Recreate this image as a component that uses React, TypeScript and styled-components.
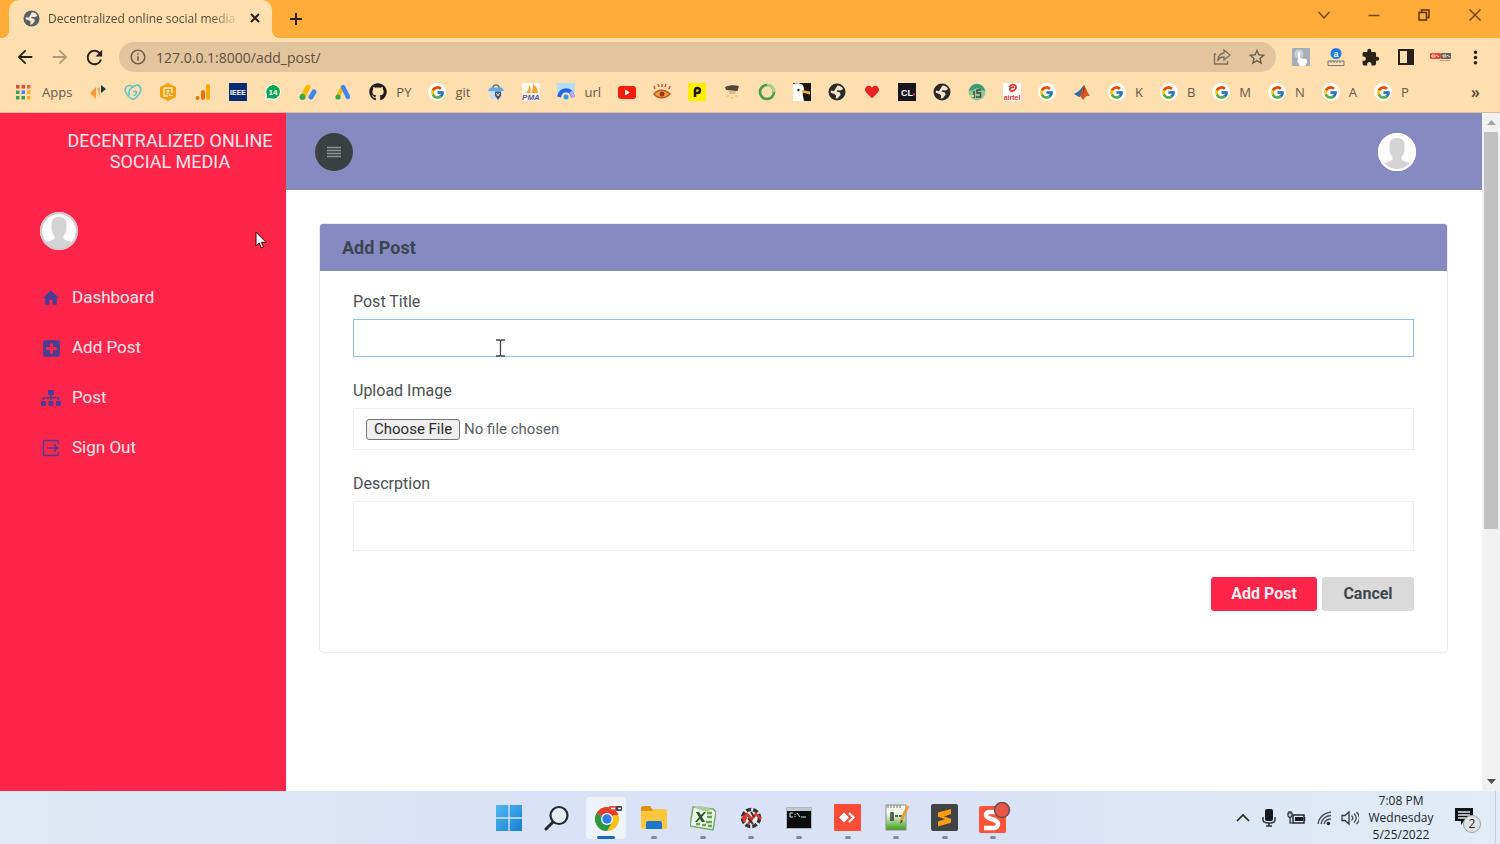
import React from "react";
import styled, { createGlobalStyle, css } from "styled-components";
import { FcGoogle } from "react-icons/fc";
import { FaGithub, FaSitemap, FaPlusSquare, FaHeart } from "react-icons/fa";
import { MdHome, MdExtension, MdMoreVert, MdStarBorder, MdArrowBack, MdArrowForward, MdRefresh, MdInfoOutline } from "react-icons/md";

const GlobalStyle = createGlobalStyle`
  * { box-sizing: border-box; }
  body { margin: 0; font-family: Roboto, "Liberation Sans", sans-serif; color: #4a4f52; background: #fff; }
  button, input, textarea { font-family: inherit; }
  a { color: inherit; text-decoration: none; }
  svg { display: block; flex: none; }
`;

const uiFont = css`font-family: "Open Sans", "Noto Sans", sans-serif;`;

const Screen = styled.div`
  min-height: 100vh;
  display: flex;
  flex-direction: column;
`;

/* ---------- browser chrome ---------- */

const TabStrip = styled.div`
  height: 38px;
  padding-left: 9px;
  display: flex;
  align-items: center;
  background: #ffac38;
`;

const Tab = styled.div`
  ${uiFont}
  position: relative;
  align-self: stretch;
  width: 263px;
  padding: 0 10px 2px 14px;
  display: flex;
  align-items: center;
  gap: 8px;
  background: #ffdfb0;
  border-radius: 10px 10px 0 0;
  font-size: 12px;
  color: #55493a;
  &::before, &::after {
    content: "";
    position: absolute;
    bottom: 0;
    width: 8px;
    height: 8px;
  }
  &::before { left: -8px; background: radial-gradient(circle at 0 0, transparent 8px, #ffdfb0 8px); }
  &::after { right: -8px; background: radial-gradient(circle at 100% 0, transparent 8px, #ffdfb0 8px); }
`;

const TabTitle = styled.span`
  flex: 1;
  overflow: hidden;
  white-space: nowrap;
  mask-image: linear-gradient(to right, #000 85%, transparent 100%);
`;

const IconButton = styled.button<{ $w?: number; $tone?: string }>`
  width: ${(p) => p.$w ?? 35}px;
  height: 30px;
  padding: 0;
  border: 0;
  background: none;
  color: ${(p) => p.$tone ?? "#2a2118"};
  display: flex;
  flex: none;
  align-items: center;
  justify-content: center;
`;

const WindowControls = styled.div`
  align-self: flex-start;
  margin-left: auto;
  display: flex;
`;

const Toolbar = styled.div`
  height: 38px;
  padding: 0 7px;
  display: flex;
  align-items: center;
  background: #ffdfb0;
`;

const AddressBar = styled.div`
  flex: 1;
  height: 30px;
  margin: 0 7px;
  padding: 0 2px 0 10px;
  display: flex;
  align-items: center;
  border-radius: 15px;
  background: #e3c59d;
  color: #6b5c49;
`;

const AddressInput = styled.input`
  ${uiFont}
  flex: 1;
  min-width: 0;
  margin-left: 9px;
  padding: 0;
  border: 0;
  outline: 0;
  background: none;
  color: #5e5141;
  font-size: 14px;
`;

const BookmarkBar = styled.nav`
  ${uiFont}
  height: 37px;
  padding: 0 20px 4px 15px;
  display: flex;
  align-items: center;
  gap: 17px;
  background: #ffdfb0;
  border-bottom: 1px solid #d5bda2;
  font-size: 13px;
  color: #66594a;
`;

const Bookmark = styled.a`
  display: flex;
  align-items: center;
  gap: 9px;
`;

const GoogleBadge = styled.span`
  width: 18px;
  height: 18px;
  display: grid;
  place-items: center;
  border-radius: 50%;
  background: #fff;
`;

const More = styled.button`
  ${uiFont}
  margin-left: auto;
  padding: 0;
  border: 0;
  background: none;
  color: #4b4034;
  font-size: 16px;
  font-weight: 600;
`;

/* ---------- web page ---------- */

const Viewport = styled.div`
  flex: 1;
  display: flex;
`;

const Sidebar = styled.aside`
  position: relative;
  width: 286px;
  flex: none;
  background: #ff244a;
  color: #ffe6ea;
`;

const Brand = styled.h1`
  margin: 0;
  padding: 17px 0 0 54px;
  font-size: 18px;
  line-height: 21px;
  font-weight: 400;
  text-align: center;
`;

const SidebarAvatar = styled.div`
  margin: 40px 0 0 40px;
`;

const NavList = styled.ul`
  margin: 0;
  padding: 32px 0 0 40px;
  list-style: none;
  display: grid;
  gap: 20px;
`;

const NavLink = styled.a`
  height: 30px;
  display: flex;
  align-items: center;
  gap: 10px;
  font-size: 17px;
  svg { color: #473f94; }
`;

const NavIcon = styled.span`
  width: 22px;
  padding-top: 2px;
  display: flex;
  justify-content: center;
`;

const Content = styled.div`
  flex: 1;
  min-width: 0;
`;

const PageHeader = styled.header`
  height: 77px;
  padding: 0 66px 0 29px;
  display: flex;
  align-items: center;
  justify-content: space-between;
  background: #858ac0;
`;

const MenuButton = styled.button`
  width: 38px;
  height: 38px;
  padding: 0;
  border: 0;
  border-radius: 50%;
  display: grid;
  place-items: center;
  background: #3a3f42;
  color: #8d9396;
`;

const Main = styled.main`
  padding: 33px 34px 34px 33px;
`;

const Card = styled.section`
  border: 1px solid #ededf0;
  border-radius: 4px;
  overflow: hidden;
`;

const CardTitle = styled.h2`
  margin: 0;
  padding: 0 22px;
  font-size: 18px;
  line-height: 47px;
  font-weight: 700;
  color: #3c4552;
  background: #858ac0;
`;

const Form = styled.form`
  position: relative;
  padding: 19px 33px 41px;
`;

const Field = styled.div`
  margin-bottom: 22px;
  display: flex;
  flex-direction: column;
`;

const Label = styled.label`
  margin-bottom: 5px;
  font-size: 16px;
  line-height: 24px;
`;

const control = css`
  width: 100%;
  padding: 0 12px;
  border: 1px solid #f0f0f2;
  border-radius: 0;
  outline: 0;
  background: #fff;
  color: #5a5f62;
`;

const TextInput = styled.input`
  ${control}
  height: 38px;
  border-color: #94c3e6;
  font-size: 16px;
`;

const FileInput = styled.input`
  ${control}
  height: 42px;
  padding-top: 10px;
  font-size: 15px;
  line-height: 21px;
  &::file-selector-button {
    height: 21px;
    margin: 0 4px 0 0;
    padding: 0 7px;
    border: 1px solid #767676;
    border-radius: 3px;
    background: #efefef;
    color: #2c2c2c;
    font: inherit;
    line-height: 19px;
  }
`;

const TextArea = styled.textarea`
  ${control}
  height: 50px;
  padding: 12px;
  resize: none;
  font-size: 16px;
`;

const Actions = styled.div`
  margin-top: 26px;
  display: flex;
  justify-content: flex-end;
  gap: 5px;
`;

const ActionButton = styled.button<{ $primary?: boolean }>`
  height: 34px;
  width: ${(p) => (p.$primary ? 106 : 92)}px;
  padding: 0 0 2px;
  border: 0;
  border-radius: 3px;
  background: ${(p) => (p.$primary ? "#ff244a" : "#dadada")};
  color: ${(p) => (p.$primary ? "#ffeef0" : "#3f484e")};
  font-size: 16px;
  font-weight: 700;
`;

const ScrollTrack = styled.div`
  width: 18px;
  flex: none;
  padding: 0 2px;
  display: flex;
  flex-direction: column;
  align-items: center;
  background: #f1f1f1;
`;

const ScrollArrow = styled.span`
  height: 19px;
  display: grid;
  place-items: center;
`;

const ScrollRail = styled.div`
  flex: 1;
  width: 100%;
`;

const ScrollThumb = styled.div`
  height: 62%;
  background: #c1c1c1;
`;

const Pointer = styled.span<{ $x: number; $y: number }>`
  position: absolute;
  left: ${(p) => p.$x}px;
  top: ${(p) => p.$y}px;
  pointer-events: none;
`;

/* ---------- taskbar ---------- */

const Taskbar = styled.footer`
  height: 53px;
  padding-left: 2px;
  display: grid;
  grid-template-columns: 1fr 532px 1fr;
  align-items: center;
  background: linear-gradient(to right, #dfe9f5, #d9e2f6 35%, #d9e2f6 65%, #e0ecf6);
`;

const Apps = styled.div`
  grid-column: 2;
  display: flex;
  justify-content: space-between;
`;

const AppButton = styled.button<{ $state?: "active" | "open" }>`
  position: relative;
  width: 40px;
  height: 42px;
  margin: 0 4px;
  padding: 0;
  border: 0;
  border-radius: 4px;
  display: grid;
  place-items: center;
  background: ${(p) => (p.$state === "active" ? "#eef3fb" : "none")};
  &::after {
    content: "";
    position: absolute;
    bottom: 0;
    left: 50%;
    transform: translateX(-50%);
    width: ${(p) => (p.$state === "active" ? 18 : p.$state ? 6 : 0)}px;
    height: 3px;
    border-radius: 2px;
    background: ${(p) => (p.$state === "active" ? "#1769c8" : "#858b9c")};
  }
`;

const Tray = styled.div`
  ${uiFont}
  justify-self: end;
  padding-right: 4px;
  display: flex;
  align-items: center;
  color: #20242a;
`;

const Clock = styled.time`
  width: 78px;
  text-align: center;
  font-size: 12px;
  line-height: 17px;
`;

const Notifications = styled.button`
  width: 28px;
  height: 30px;
  margin: 0 13px 0 14px;
  padding: 0;
  border: 0;
  background: none;
`;

const TrayEdge = styled.span`
  width: 1px;
  height: 53px;
  background: #c5d0dc;
`;

/* ---------- drawings ---------- */

const Svg = ({ s = 18, w, v = "0 0 18 18", children }: { s?: number; w?: number; v?: string; children: React.ReactNode }) => (
  <svg width={w ?? s} height={s} viewBox={v} fill="none" aria-hidden="true">{children}</svg>
);

const Globe = ({ c = "#2c2925", s = 16 }) => (
  <Svg s={s}>
    <circle cx="9" cy="9" r="8.500" fill={c} />
    <path d="M9.500 2.500c2.500 0 4.500 1.300 5.700 3.500l-2.700 1.600-3.200-.4-.7 1.300 3.400 1 .6 2.200-2.800 3.500-2.300.3.700-2.800L6.500 11 2.800 9.800 3 7.500l3 .8L7 6.500z" fill="#f6e6cf" />
  </Svg>
);

const AvatarDrawing = ({ ring = "#fff" }) => (
  <svg width="38" height="38" viewBox="0 0 38 38" aria-hidden="true">
    <defs><clipPath id="face"><circle cx="19" cy="19" r="18" /></clipPath></defs>
    <circle cx="19" cy="19" r="18" fill="#fdfdfd" stroke={ring} strokeWidth="2" />
    <g clipPath="url(#face)" fill="#d4d4d4">
      <path d="M11.500 12c0-4.500 2.500-7 7.500-7s7.500 2.500 7.500 7v5c0 2.500-1.500 5-3 7v2.500c2 2.500 8 2.500 10.500 5.500V38H4v-6c2.500-3 8.500-3 10.500-5.500V24c-1.500-2-3-4.500-3-7z" />
    </g>
    <circle cx="19" cy="19" r="18" fill="none" stroke={ring} strokeWidth="2" />
  </svg>
);

const GoogleIcon = () => <GoogleBadge><FcGoogle size={15} /></GoogleBadge>;

const AppsGrid = () => (
  <Svg>
    {["#e8453c", "#e8453c", "#ea6a35", "#3aa757", "#4285f4", "#f6b21b", "#3aa757", "#3f9b55", "#f6b21b"].map((c, i) => (
      <rect key={i} x={1 + (i % 3) * 5.5} y={2 + Math.floor(i / 3) * 5.5} width="3.500" height="3.500" fill={c} />
    ))}
  </Svg>
);

const bookmarks: { icon: React.ReactNode; name: string; label?: string }[] = [
  { name: "Apps", label: "Apps", icon: <AppsGrid /> },
  { name: "Designer", icon: <Svg><path d="M1 10l6-6v12z" fill="#fa9a3c" /><path d="M8 6l3-2v11z" fill="#ef9d52" opacity=".8" /><path d="M12 2l5 4-5 4z" fill="#123b3f" /></Svg> },
  { name: "GoDaddy", icon: <Svg><path d="M9 16.500C3.500 14 .5 9 1.500 5.500S6 1.500 9 4c2.500-2.800 6.500-2.500 7.500 1S14.500 14 9 16.500zM5.500 12.500C4 8.500 6 4.500 11 2.500M9 8.500h3.500c.3 2-1 3.800-3 4" stroke="#68c6cb" strokeWidth="1.700" /></Svg> },
  { name: "Hexagon", icon: <Svg><path d="M9 0l8 4v10l-8 4-8-4V4z" fill="#f5a011" /><path d="M5 5h8v5M5 5v8h4M7.500 8h3M7.500 10.500h2M11 13v-2M13 13v-1" stroke="#fff0cc" strokeWidth="1.400" /></Svg> },
  { name: "Analytics", icon: <Svg><rect x="12" y="1" width="4" height="16" rx="2" fill="#f9ab00" /><rect x="7" y="7" width="4" height="10" rx="2" fill="#e8710a" /><circle cx="3.500" cy="15" r="2" fill="#e8710a" /></Svg> },
  { name: "IEEE Xplore", icon: <Svg><rect width="18" height="18" fill="#082a72" /><text x="9" y="12" textAnchor="middle" fontFamily="Liberation Sans" fontWeight="700" fontSize="7" fill="#fff">IEEE</text></Svg> },
  { name: "WhatsApp", icon: <Svg><path d="M1 17l1-4a8 8 0 1 1 3 3z" fill="#fff" /><path d="M2.500 15.500l.6-3.500A6.800 6.800 0 1 1 6 14.900z" fill="#06a94d" /><text x="9" y="12" textAnchor="middle" fontFamily="Liberation Sans" fontWeight="700" fontSize="8" fill="#fff">14</text></Svg> },
  { name: "AdSense", icon: <Svg><path d="M4 13L9 4" stroke="#fbbc04" strokeWidth="5" strokeLinecap="round" /><path d="M12 14l3-5" stroke="#4285f4" strokeWidth="5" strokeLinecap="round" /><circle cx="3.500" cy="14" r="3" fill="#34a853" /></Svg> },
  { name: "Google Ads", icon: <Svg><path d="M4 13L9 4" stroke="#fbbc04" strokeWidth="4" /><path d="M9 4l5 10" stroke="#4285f4" strokeWidth="4.500" strokeLinecap="round" /><circle cx="4" cy="14" r="2.600" fill="#34a853" /></Svg> },
  { name: "PY", label: "PY", icon: <FaGithub size={18} color="#221d19" /> },
  { name: "git", label: "git", icon: <GoogleIcon /> },
  { name: "Store", icon: <Svg><path d="M6 5c0-4 6-4 6 0" stroke="#777" strokeWidth="1.500" /><path d="M3 4.500h12L17 8H1z" fill="#58a8f2" /><path d="M3 8h12v7l-1 1H4l-1-1z" fill="#c7ddf0" /><path d="M8 8.500h6v4L11 17l-3-4.500z" fill="#4a4f58" /><path d="M9.500 10l1.500 3 1.500-3" stroke="#dfe7ee" /></Svg> },
  { name: "phpMyAdmin", icon: <Svg><rect width="18" height="18" fill="#fdf6ea" /><path d="M3 10c3-1 4-4 4-8 2 3 2 6 1 8zM9 10c2-3 2-6 2-9 4 3 5 6 5 9z" fill="#f3a530" /><text x="9" y="17" textAnchor="middle" fontFamily="Liberation Sans" fontWeight="700" fontStyle="italic" fontSize="8" fill="#55569a">PMA</text></Svg> },
  { name: "url", label: "url", icon: <Svg><rect width="18" height="10" fill="#b7def6" /><path d="M2 14C4 5 14 5 16 14" stroke="#2464ed" strokeWidth="4" /><path d="M14 8.500l2.500 6" stroke="#bba9ef" strokeWidth="3.500" /><circle cx="9" cy="14" r="2.500" fill="#20a1f0" /></Svg> },
  { name: "YouTube", icon: <Svg><rect y="3" width="18" height="13" rx="3" fill="#f71b0c" /><path d="M7 6.500v6l5-3z" fill="#fff" /></Svg> },
  { name: "Eye", icon: <Svg><path d="M1 11c4-5 11-5 16 0-5 5-12 5-16 0z" fill="#f2a23c" stroke="#c8542a" strokeWidth="1.500" /><circle cx="9" cy="11" r="2.500" fill="#9e3720" /><path d="M2 6L1 3M6 4L5 1M9 4V1M12 4l1-3M16 6l1-3" stroke="#dd5333" strokeWidth="1.500" /></Svg> },
  { name: "P", icon: <Svg><rect width="18" height="18" fill="#ffee00" /><path d="M7 14V7a2.500 2.500 0 1 1 2.500 3H8" stroke="#1b1a10" strokeWidth="2.500" /></Svg> },
  { name: "Hat", icon: <Svg><path d="M2 4c4-2 10-2 14-1l-1.500 5L3 7z" fill="#51463b" /><path d="M5 8h8l-1 3H7z" fill="#dcb98a" /><path d="M4 13h2M8 15h2M12 13h2" stroke="#efc34e" strokeWidth="1.500" /></Svg> },
  { name: "Ring", icon: <Svg><circle cx="9" cy="9" r="7" stroke="#4b9d4c" strokeWidth="2.700" /><path d="M9 2a7 7 0 0 1 7 7" stroke="#a9d494" strokeWidth="2.700" /></Svg> },
  { name: "Bird", icon: <Svg><rect width="18" height="18" fill="#1b1713" /><path d="M0 1c6-2 11 0 11 5 0 3-2 4-1 7l1 5H0z" fill="#fff" /><path d="M9 7l8 1.500v3L9 9.500z" fill="#f6b13c" /><circle cx="5.500" cy="7" r="1.200" fill="#222" /></Svg> },
  { name: "Globe", icon: <Globe s={18} /> },
  { name: "Heart", icon: <Svg><FaHeart x={2} y={2} size={14} color="#ec2121" /></Svg> },
  { name: "CL", icon: <Svg><rect width="18" height="18" fill="#17151b" /><text x="9" y="12.500" textAnchor="middle" fontFamily="Liberation Sans" fontWeight="700" fontSize="9" fill="#fff">CL</text><rect x="15" y="10.500" width="2" height="2" fill="#e62a69" /></Svg> },
  { name: "Globe two", icon: <Globe s={18} /> },
  { name: "Tree", icon: <Svg><circle cx="9" cy="9" r="8.500" fill="#8fc79c" /><path d="M1 8c1-5 5-7 8-7s7 2 8 7l-3-1-5-2-4 2z" fill="#3f9a72" /><path d="M13 7H9v3h3.500v4H8M6 8v7" stroke="#414b35" strokeWidth="1.500" /><path d="M2 13h4" stroke="#e0cf7a" strokeWidth="2" /></Svg> },
  { name: "airtel", icon: <Svg><rect width="18" height="18" fill="#fff" /><path d="M6 4c3-4 8-2 7 1s-5 4-6 2 3-4 4-2" stroke="#e3342f" strokeWidth="1.700" /><text x="9" y="16.500" textAnchor="middle" fontFamily="Liberation Sans" fontWeight="700" fontSize="7" fill="#e3342f">airtel</text></Svg> },
  { name: "Google", icon: <GoogleIcon /> },
  { name: "MATLAB", icon: <Svg><path d="M1 11l5-3 5-6-3 11-2 1z" fill="#2a6fab" /><path d="M11 2c2 3 4 9 6 11-3-1-4 0-7 4l-3-4z" fill="#d9541e" /><path d="M11 2c1 4 0 9-4 11l3-3z" fill="#5a2416" /></Svg> },
  ...["K", "B", "M", "N", "A", "P"].map((l) => ({ name: l, label: l, icon: <GoogleIcon /> })),
];

const SignOutIcon = () => (
  <Svg>
    <path d="M16.500 5V3a1.500 1.500 0 0 0-1.500-1.500H3A1.500 1.500 0 0 0 1.500 3v12A1.500 1.500 0 0 0 3 16.500h12a1.500 1.500 0 0 0 1.500-1.500v-2" stroke="currentColor" strokeWidth="1.500" />
    <path d="M5 9h11M12 5.500L15.500 9 12 12.500" stroke="currentColor" strokeWidth="1.700" />
  </Svg>
);

const navItems = [
  { label: "Dashboard", icon: <MdHome size={20} /> },
  { label: "Add Post", icon: <FaPlusSquare size={19} /> },
  { label: "Post", icon: <FaSitemap size={20} /> },
  { label: "Sign Out", icon: <SignOutIcon /> },
];

const ChromeLogo = () => (
  <Svg s={32} v="0 0 32 32">
    <circle cx="17" cy="17" r="12" fill="#fbc116" />
    <path d="M17 17L6.600 11A12 12 0 0 1 27.400 11z" fill="#e33b2e" />
    <path d="M6.600 11A12 12 0 0 0 17 29l5.200-9L17 17z" fill="#2b9846" />
    <path d="M17 11h10.400l1 2H17z" fill="#e33b2e" />
    <circle cx="17" cy="17" r="6" fill="#fff" /><circle cx="17" cy="17" r="4.700" fill="#2f7de9" />
    <rect x="19" y="4" width="8" height="5" rx="1" fill="#e54a3c" /><rect x="26" y="4" width="6" height="5" rx="1" fill="#444" />
    <path d="M21 6.500h4M28 6.500h3" stroke="#fff" strokeWidth="1.500" />
  </Svg>
);

const taskApps: { name: string; state?: "active" | "open"; icon: React.ReactNode }[] = [
  { name: "Start", icon: <Svg s={26} v="0 0 26 26"><defs><linearGradient id="win" x2="1" y2="1"><stop stopColor="#51b9f0" /><stop offset="1" stopColor="#187fd2" /></linearGradient></defs><path d="M0 0h12.300v12.300H0zM13.700 0H26v12.300H13.700zM0 13.700h12.300V26H0zM13.700 13.700H26V26H13.700z" fill="url(#win)" /></Svg> },
  { name: "Search", icon: <Svg s={26} v="0 0 26 26"><circle cx="15" cy="10.500" r="8.500" fill="#e7edf6" stroke="#252a30" strokeWidth="2.200" /><path d="M9 17l-7 7" stroke="#252a30" strokeWidth="3" strokeLinecap="round" /></Svg> },
  { name: "Chrome", state: "active", icon: <ChromeLogo /> },
  { name: "File Explorer", state: "open", icon: <Svg s={26} v="0 0 26 26"><path d="M0 3a2 2 0 0 1 2-2h7l3 4h14v4H0z" fill="#d99513" /><path d="M0 6h11l2-2h11a2 2 0 0 1 2 2v16a2 2 0 0 1-2 2H2a2 2 0 0 1-2-2z" fill="#fcc63c" /><path d="M5 24v-6a2 2 0 0 1 2-2h12a2 2 0 0 1 2 2v6z" fill="#1c76c9" /></Svg> },
  { name: "Excel", state: "open", icon: <Svg s={26} v="0 0 26 26"><path d="M3 2l20 2 3 3-3 18L0 21z" fill="#eef5e9" stroke="#78aa69" strokeWidth="1.500" /><path d="M3 2l8-1 11 3-5 3z" fill="#a9cf99" /><path d="M6 7h3l2 3 3-3h2l-4 5 3 5h-3l-2-3-3 3H5l4-5z" fill="#24572a" /><path d="M17 8h5M17 12h5M16 17h6M6 19h4M12 20h4M18 21h4" stroke="#65a552" strokeWidth="2.500" /></Svg> },
  { name: "Network", state: "open", icon: <Svg s={22} v="0 0 22 22"><circle cx="11" cy="11" r="8.500" fill="#ececec" stroke="#34373b" strokeWidth="3.500" strokeDasharray="5 2" /><path d="M2 12l5-5 5 5 4-5 5 5M7 7l-3 8M12 12l-4 5" stroke="#df3730" strokeWidth="2.500" /><path d="M11 5l3 5M8 11l5 6" stroke="#33373b" strokeWidth="2" /></Svg> },
  { name: "Command Prompt", state: "open", icon: <Svg s={22} w={26} v="0 0 26 22"><rect x=".5" y=".5" width="25" height="21" rx="1" fill="#0b0c0e" stroke="#b5babf" /><rect x="1" y="1" width="24" height="3" fill="#c4c9ce" /><path d="M7 6H4v4h3M9 7v1M9 9v1M11 6l3 4M15 10h5" stroke="#e0e0e0" /></Svg> },
  { name: "AnyDesk", state: "open", icon: <Svg s={27} v="0 0 27 27"><rect width="27" height="27" rx="1" fill="#fa4c37" /><path d="M10 8.500l5 5-5 5-5-5z" fill="#fff" /><path d="M15 9l4.500 4.500L15 18" stroke="#fff" strokeWidth="2.200" /></Svg> },
  { name: "Notepad++", state: "open", icon: <Svg s={27} v="0 0 27 27"><defs><linearGradient id="note" x2="0" y2="1"><stop offset=".35" stopColor="#f5f8ef" /><stop offset="1" stopColor="#3c9f17" /></linearGradient></defs><path d="M3 1h20v25H3z" fill="url(#note)" stroke="#8a9180" /><path d="M5 1v3M8 1v3M11 1v3M14 1v3M17 1v3" stroke="#737970" /><path d="M8 17V9h2v8M12 12h3M16 12h3" stroke="#363d32" strokeWidth="1.500" /><path d="M25 2l-7 15" stroke="#e2a13a" strokeWidth="3" /><path d="M18 16l-1 4 3-3z" fill="#4c3b28" /></Svg> },
  { name: "Sublime Text", state: "open", icon: <Svg s={27} v="0 0 27 27"><rect width="27" height="27" rx="2" fill="#414347" /><path d="M7 8.500l13-3.500v5l-7 2.500 7 2.300v4L7 22.500v-5l7-2.500-7-2.300z" fill="#ff9d0f" /></Svg> },
  { name: "Snagit", state: "open", icon: <Svg s={32} w={36} v="0 0 36 32"><rect x="4" y="4" width="27" height="27" rx="2" fill="#fb5438" /><path d="M24 10H14a3 3 0 0 0-3 3c0 5 12 3 12 9a4 4 0 0 1-4 4H9" stroke="#fff" strokeWidth="4.500" /><circle cx="27" cy="8" r="7.500" fill="#e85648" stroke="#6b4c51" strokeWidth="1.500" /></Svg> },
];

const bookmarkItems = bookmarks.map((b) => (
  <Bookmark key={b.name} href="#" aria-label={b.name}>{b.icon}{b.label && <span>{b.label}</span>}</Bookmark>
));

export default function App() {
  return (
    <Screen>
      <GlobalStyle />
      <TabStrip>
        <Tab>
          <Globe c="#566069" s={17} />
          <TabTitle>Decentralized online social media</TabTitle>
          <IconButton $w={15} aria-label="Close tab"><Svg s={10} v="0 0 10 10"><path d="M1 1l8 8M9 1L1 9" stroke="currentColor" strokeWidth="2" /></Svg></IconButton>
        </Tab>
        <IconButton $w={48} aria-label="New tab"><Svg s={14} v="0 0 14 14"><path d="M7 1v12M1 7h12" stroke="currentColor" strokeWidth="2" /></Svg></IconButton>
        <WindowControls>
          <IconButton $w={51} $tone="#704717" aria-label="Search tabs"><Svg s={12} v="0 0 12 12"><path d="M.5 3L6 9l5.500-6" stroke="currentColor" strokeWidth="1.500" /></Svg></IconButton>
          <IconButton $w={50} $tone="#704717" aria-label="Minimize"><Svg s={12} v="0 0 12 12"><path d="M.5 6.500h11" stroke="currentColor" strokeWidth="1.500" /></Svg></IconButton>
          <IconButton $w={50} $tone="#583509" aria-label="Restore"><Svg s={12} v="0 0 12 12"><path d="M1 3.500h7.500V11H1zM3.500 3V1H11v7.500H9" stroke="currentColor" strokeWidth="1.500" /></Svg></IconButton>
          <IconButton $w={51} $tone="#704717" aria-label="Close"><Svg s={12} v="0 0 12 12"><path d="M.5.5l11 11M11.500.5l-11 11" stroke="currentColor" strokeWidth="1.500" /></Svg></IconButton>
        </WindowControls>
      </TabStrip>

      <Toolbar>
        <IconButton aria-label="Back"><MdArrowBack size={22} /></IconButton>
        <IconButton $tone="#b0987a" aria-label="Forward"><MdArrowForward size={22} /></IconButton>
        <IconButton aria-label="Reload"><MdRefresh size={23} /></IconButton>
        <AddressBar>
          <MdInfoOutline size={18} />
          <AddressInput aria-label="Address" defaultValue="127.0.0.1:8000/add_post/" />
          <IconButton $tone="#80705c" aria-label="Share"><Svg><path d="M3 6H1.500v10h13v-3" stroke="currentColor" strokeWidth="1.400" /><path d="M11 2l6 5-6 5V9C8 9 6 10 4.500 13 5 8 7.500 5.500 11 5z" stroke="currentColor" strokeWidth="1.300" /></Svg></IconButton>
          <IconButton $tone="#6b5c49" aria-label="Bookmark"><MdStarBorder size={20} /></IconButton>
        </AddressBar>
        <IconButton aria-label="Touch extension"><Svg><rect width="18" height="18" rx="1" fill="#a6adb8" /><circle cx="7" cy="6" r="4.500" fill="#ccd1d8" /><path d="M6 5a1 1 0 0 1 2 0v5l6 1c2 1 1 5-1 7H8l-3-5 1-1z" fill="#fff" /></Svg></IconButton>
        <IconButton aria-label="Translate extension"><Svg><circle cx="9" cy="5.500" r="5.500" fill="#197ce0" /><text x="9" y="8.500" textAnchor="middle" fontFamily="Liberation Sans" fontWeight="700" fontSize="9" fill="#fff">a</text><path d="M1 13h16v4.500H1zM4 13v2M7 13v2M10 13v2M13 13v2" stroke="#777" /></Svg></IconButton>
        <IconButton aria-label="Extensions"><MdExtension size={19} /></IconButton>
        <IconButton aria-label="Side panel"><Svg><path d="M2 2h14v14H2z" stroke="currentColor" strokeWidth="2" /><path d="M10 2h6v14h-6z" fill="currentColor" /></Svg></IconButton>
        <IconButton aria-label="Recorder"><Svg s={10} w={22} v="0 0 22 10"><rect y="1" width="11" height="6" rx="1" fill="#e34d3d" /><rect x="11" y="1" width="10" height="6" rx="1" fill="#64605c" /><path d="M2 3h3v2H2zM6 3l3 2M13 3h3v2h-3zM17 3l3 2" stroke="#f8dccb" /><path d="M10 8.500h10" stroke="#e98974" /></Svg></IconButton>
        <IconButton aria-label="Menu"><MdMoreVert size={21} /></IconButton>
      </Toolbar>

      <BookmarkBar>
        {bookmarkItems}
        <More aria-label="More bookmarks">»</More>
      </BookmarkBar>

      <Viewport>
        <Sidebar>
          <Brand>DECENTRALIZED ONLINE<br />SOCIAL MEDIA</Brand>
          <SidebarAvatar><AvatarDrawing ring="#d9c9cd" /></SidebarAvatar>
          <NavList>
            {navItems.map((n) => (
              <li key={n.label}><NavLink href="#"><NavIcon>{n.icon}</NavIcon>{n.label}</NavLink></li>
            ))}
          </NavList>
          <Pointer $x={255} $y={118}>
            <Svg s={18} w={12} v="0 0 12 18"><path d="M1 1v14l3.200-3 2.300 5 2-1-2.200-4.700H11z" fill="#fff" stroke="#2b0d14" /></Svg>
          </Pointer>
        </Sidebar>

        <Content>
          <PageHeader>
            <MenuButton aria-label="Toggle menu"><Svg s={12} w={14} v="0 0 14 12"><path d="M0 1.500h14M0 4.500h14M0 7.500h14M0 10.500h14" stroke="currentColor" strokeWidth="1.300" /></Svg></MenuButton>
            <AvatarDrawing />
          </PageHeader>
          <Main>
            <Card>
              <CardTitle>Add Post</CardTitle>
              <Form onSubmit={(e) => e.preventDefault()}>
                <Field><Label htmlFor="title">Post Title</Label><TextInput id="title" type="text" /></Field>
                <Field><Label htmlFor="image">Upload Image</Label><FileInput id="image" type="file" /></Field>
                <Field><Label htmlFor="description">Descrption</Label><TextArea id="description" /></Field>
                <Actions>
                  <ActionButton $primary type="submit">Add Post</ActionButton>
                  <ActionButton type="button">Cancel</ActionButton>
                </Actions>
                <Pointer $x={176} $y={68}>
                  <Svg s={18} w={9} v="0 0 9 18"><path d="M0 1h3.500l1 1 1-1H9M4.500 2v14M0 17h3.500l1-1 1 1H9" stroke="#444" strokeWidth="1.300" /></Svg>
                </Pointer>
              </Form>
            </Card>
          </Main>
        </Content>

        <ScrollTrack>
          <ScrollArrow><Svg s={5} w={9} v="0 0 9 5"><path d="M0 5l4.500-5L9 5z" fill="#a3a3a3" /></Svg></ScrollArrow>
          <ScrollRail><ScrollThumb /></ScrollRail>
          <ScrollArrow><Svg s={5} w={9} v="0 0 9 5"><path d="M0 0h9L4.500 5z" fill="#505050" /></Svg></ScrollArrow>
        </ScrollTrack>
      </Viewport>

      <Taskbar>
        <Apps>
          {taskApps.map((a) => <AppButton key={a.name} aria-label={a.name} $state={a.state}>{a.icon}</AppButton>)}
        </Apps>
        <Tray>
          <IconButton $w={26} aria-label="Hidden icons"><Svg s={14} v="0 0 14 14"><path d="M1 10l6-6 6 6" stroke="currentColor" strokeWidth="1.700" /></Svg></IconButton>
          <IconButton $w={26} aria-label="Microphone"><Svg><rect x="5" y="0" width="8" height="12" rx="2" fill="#15181c" /><path d="M3 8v3c0 4 12 4 12 0V8M9 14v3M6 17h6" stroke="#303439" strokeWidth="1.500" /></Svg></IconButton>
          <IconButton $w={28} aria-label="Battery"><Svg s={14} w={19} v="0 0 19 14"><path d="M6 4h11v8H6zM17.500 6v4" stroke="#25282d" strokeWidth="1.500" /><path d="M8 6h8v4H8z" fill="#15181c" /><path d="M1 2h4v3L3 7 1 5zM2 0v2M4 0v2M3 7v5h3" stroke="#25282d" strokeWidth="1.200" fill="#ccd" /></Svg></IconButton>
          <IconButton $w={27} aria-label="Wi-Fi"><Svg s={16} v="0 0 16 16"><path d="M2 14C3 7 8 3 15 2M5 14C6 9 9 6 15 5.500M8 14c1-3 3-5 7-5" stroke="#4b5057" strokeWidth="1.400" /><circle cx="12.500" cy="13.500" r="1.800" fill="#25282d" /></Svg></IconButton>
          <IconButton $w={25} aria-label="Volume"><Svg><path d="M1 6.500h3L8 3v12l-4-3.500H1z" stroke="#33373c" strokeWidth="1.300" /><path d="M10.500 6.500c1.500 1.500 1.500 3.500 0 5M13 4.500c3 3 3 6 0 9M15.500 3c4 4 4 8 0 12" stroke="#4b5057" strokeWidth="1.300" /></Svg></IconButton>
          <Clock>7:08 PM<br />Wednesday<br />5/25/2022</Clock>
          <Notifications aria-label="Notifications">
            <Svg s={30} w={28} v="0 0 28 30"><path d="M1 5h18v13h-9l-3 4v-4H1z" fill="#0f1216" /><path d="M4 9h12M4 12h12M4 15h8" stroke="#dfe7ee" strokeWidth="1.300" /><circle cx="18" cy="21" r="8.500" fill="#e2e3e5" stroke="#9da1a6" /><text x="18" y="25" textAnchor="middle" fontFamily="Open Sans" fontSize="12" fill="#222">2</text></Svg>
          </Notifications>
          <TrayEdge />
        </Tray>
      </Taskbar>
    </Screen>
  );
}
